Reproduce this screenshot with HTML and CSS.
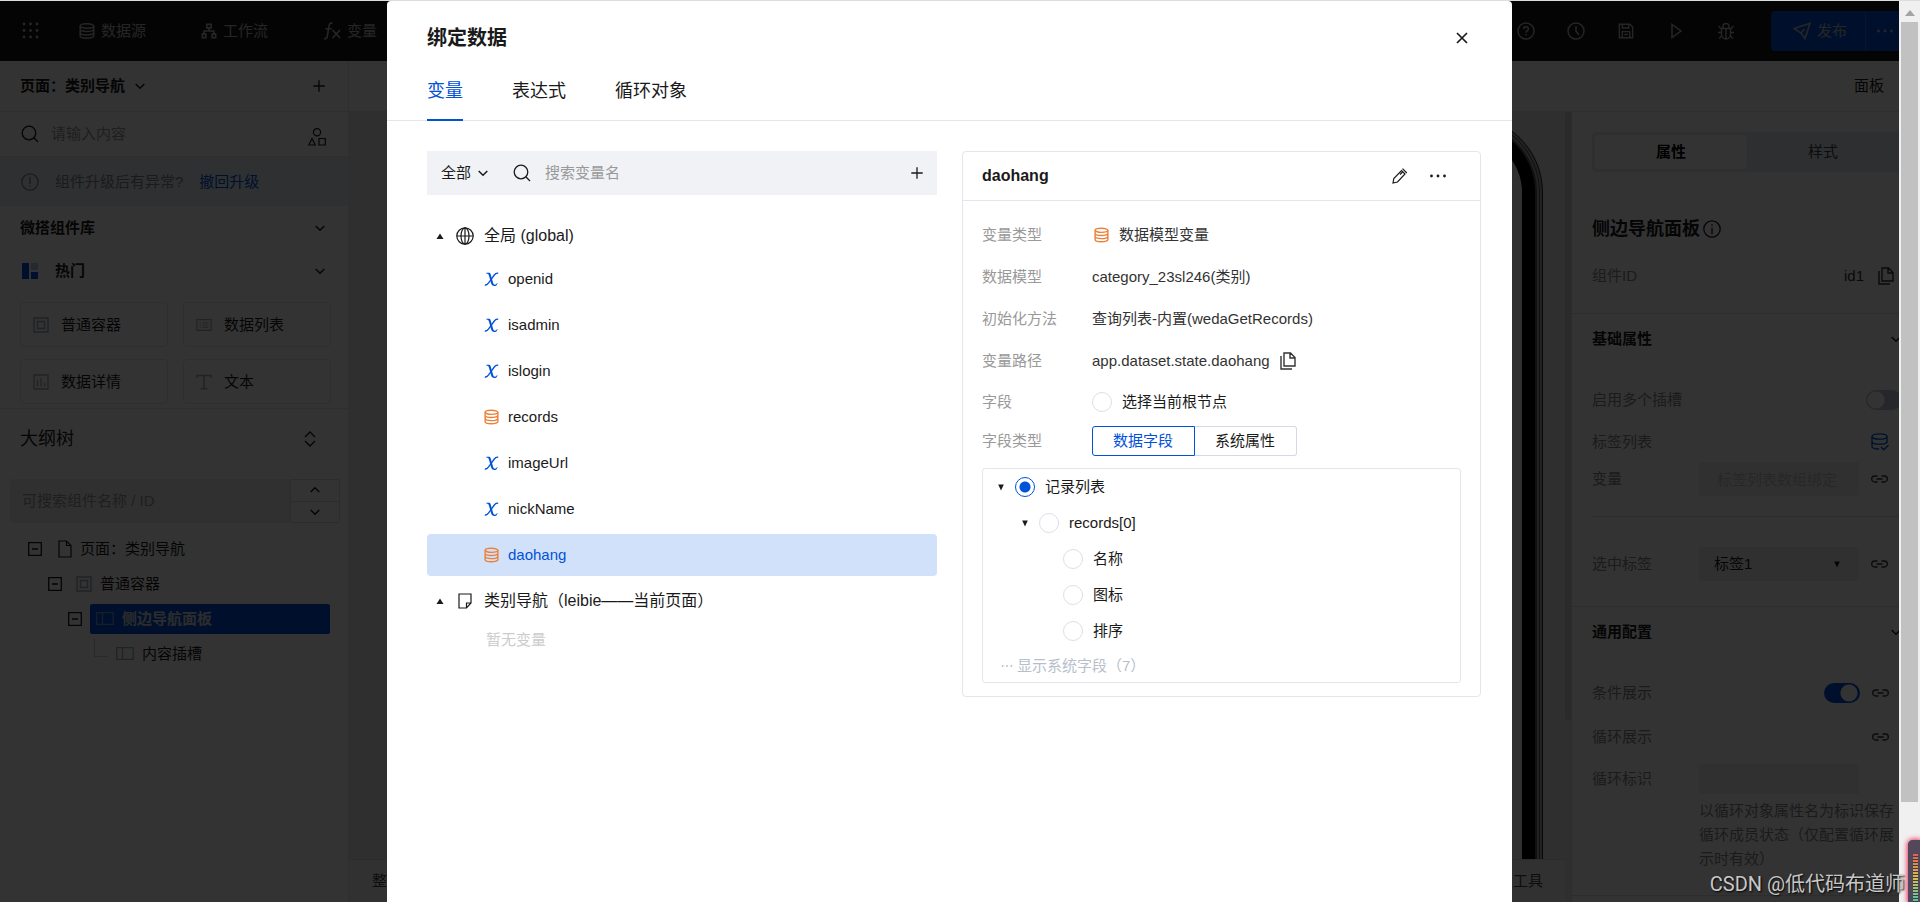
FILE: index.html
```
<!DOCTYPE html>
<html lang="zh-CN">
<head>
<meta charset="utf-8">
<title>绑定数据</title>
<link rel="stylesheet" href="styles.css">
</head>
<body>
<svg class="sprite" aria-hidden="true">
  <symbol id="i-grid" viewBox="0 0 18 18"><g fill="currentColor"><circle cx="2" cy="2" r="1.4"/><circle cx="8.500" cy="2" r="1.4"/><circle cx="15" cy="2" r="1.4"/><circle cx="2" cy="8.500" r="1.4"/><circle cx="8.500" cy="8.500" r="1.4"/><circle cx="15" cy="8.500" r="1.4"/><circle cx="2" cy="15" r="1.4"/><circle cx="8.500" cy="15" r="1.4"/><circle cx="15" cy="15" r="1.4"/></g></symbol>
  <symbol id="i-db" viewBox="0 0 16 16"><g fill="none" stroke="currentColor" stroke-width="1.500"><ellipse cx="8" cy="3" rx="6.800" ry="2.200"/><path d="M1.200 3v10c0 1.200 3 2.200 6.800 2.200s6.800-1 6.800-2.200V3M1.200 6.300c0 1.200 3 2.200 6.800 2.200s6.800-1 6.800-2.200M1.200 9.700c0 1.200 3 2.200 6.800 2.200s6.800-1 6.800-2.200"/></g></symbol>
  <symbol id="i-flow" viewBox="0 0 18 18"><g fill="none" stroke="currentColor" stroke-width="1.800"><path d="M6.500 1.500h5v4h-5zM1.500 12.500h4v4h-4zM12.500 12.500h4v4h-4zM9 5.500V9M3.500 12.500V9h11v3.500"/></g></symbol>
  <symbol id="i-fx" viewBox="0 0 18 18"><path d="M9.500 1.300C7 .6 6.300 2 6 4L4.300 14c-.4 2.300-1.500 3-3.300 2.500M2.500 6.800h6M9.500 8l7.500 8M17 8l-7.500 8" fill="none" stroke="currentColor" stroke-width="1.600"/></symbol>
  <symbol id="i-help" viewBox="0 0 18 18"><g fill="none" stroke="currentColor" stroke-width="1.500"><circle cx="9" cy="9" r="8"/><path d="M6.600 7.200C6.600 5.500 7.600 4.700 9 4.700s2.400.9 2.400 2.200c0 1.700-2.400 1.900-2.400 3.900M9 12v1.600"/></g></symbol>
  <symbol id="i-clock" viewBox="0 0 18 18"><g fill="none" stroke="currentColor" stroke-width="1.500"><circle cx="9" cy="9" r="8"/><path d="M9 4v5.200l3 3.500"/></g></symbol>
  <symbol id="i-save" viewBox="0 0 18 18"><path d="M1.500 1.500h12l3 3v12h-15zM5 1.500v4.200h7V1.500M4.800 16.500V9.700h8.400v6.800M7 13h4" fill="none" stroke="currentColor" stroke-width="1.600"/></symbol>
  <symbol id="i-play" viewBox="0 0 18 18"><path d="M5 2.500v13L14 9z" fill="none" stroke="currentColor" stroke-width="1.500"/></symbol>
  <symbol id="i-bug" viewBox="0 0 18 18"><path d="M4.500 6.500h9v5.500a4.500 5 0 0 1-9 0zM6 6.500V4.500a3 3 0 0 1 6 0v2M9 7v9.500M1.500 4l3 3M16.500 4l-3 3M1 10.500h3.500M17 10.500h-3.500M2 16.500l3-3M16 16.500l-3-3" fill="none" stroke="currentColor" stroke-width="1.400"/></symbol>
  <symbol id="i-send" viewBox="0 0 18 18"><path d="M1 6.500 17 1.500l-5 15-4-5.500zM8 11l3.500-4" fill="none" stroke="currentColor" stroke-width="1.600"/></symbol>
  <symbol id="i-dots" viewBox="0 0 18 18"><g fill="currentColor"><circle cx="2.500" cy="9" r="1.400"/><circle cx="9" cy="9" r="1.400"/><circle cx="15.500" cy="9" r="1.400"/></g></symbol>
  <symbol id="i-down" viewBox="0 0 12 12"><path d="M1.700 4 6 8.300 10.300 4" fill="none" stroke="currentColor" stroke-width="1.500"/></symbol>
  <symbol id="i-up" viewBox="0 0 12 12"><path d="M1.700 8 6 3.700 10.300 8" fill="none" stroke="currentColor" stroke-width="1.500"/></symbol>
  <symbol id="i-updown" viewBox="0 0 16 16"><path d="M3 6l5-5 5 5M3 10l5 5 5-5" fill="none" stroke="currentColor" stroke-width="1.400"/></symbol>
  <symbol id="i-plus" viewBox="0 0 12 12"><path d="M6 .3v11.400M.3 6h11.400" fill="none" stroke="currentColor" stroke-width="1.300"/></symbol>
  <symbol id="i-search" viewBox="0 0 18 18"><g fill="none" stroke="currentColor" stroke-width="1.300"><circle cx="8" cy="8" r="6.800"/><path d="m12.800 12.800 4.200 4.200"/></g></symbol>
  <symbol id="i-shapes" viewBox="0 0 18 18"><g fill="none" stroke="currentColor" stroke-width="1.200"><circle cx="9" cy="4.300" r="3.600"/><path d="M4 10.500.8 17h6.400zM11 10.500h6.300V17H11z"/></g></symbol>
  <symbol id="i-warn" viewBox="0 0 18 18"><g fill="none" stroke="currentColor" stroke-width="1.300"><circle cx="9" cy="9" r="8.200"/><path d="M9 4v7M9 12.500V14"/></g></symbol>
  <symbol id="i-info" viewBox="0 0 18 18"><g fill="none" stroke="currentColor" stroke-width="1.300"><circle cx="9" cy="9" r="8.200"/><path d="M9 7.500V14M9 4.200v1.600"/></g></symbol>
  <symbol id="i-blocks" viewBox="0 0 16 16"><path d="M0 0h7v16H0zM9 9h7v7H9z" fill="#0052d9"/><path d="M9 0h7v7H9z" fill="#b5c7f0"/></symbol>
  <symbol id="i-box" viewBox="0 0 16 16"><path d="M1 1h14v14H1zM4.500 4.500h7v7h-7z" fill="none" stroke="currentColor" stroke-width="1.400"/></symbol>
  <symbol id="i-list" viewBox="0 0 18 18"><path d="M1 3h16v12H1zM4 6.500h1.500M7 6.500h7M4 9h1.500M7 9h7M4 11.500h1.500M7 11.500h7" fill="none" stroke="currentColor" stroke-width="1.300"/></symbol>
  <symbol id="i-chart" viewBox="0 0 16 16"><path d="M1 1h14v14H1zM4.500 6v6.500M8 4v8.500M11.500 9v3.500" fill="none" stroke="currentColor" stroke-width="1.300"/></symbol>
  <symbol id="i-text" viewBox="0 0 16 16"><path d="M1 4V1.500h14V4M8 1.500v13M4.500 14.800h7" fill="none" stroke="currentColor" stroke-width="1.500"/></symbol>
  <symbol id="i-minus" viewBox="0 0 14 14"><path d="M.7.7h12.600v12.600H.7zM4 7h6" fill="none" stroke="currentColor" stroke-width="1.300"/></symbol>
  <symbol id="i-file" viewBox="0 0 14 18"><path d="M1 1h7.500L13 5.500V17H1zM8.500 1v4.500H13" fill="none" stroke="currentColor" stroke-width="1.200"/></symbol>
  <symbol id="i-cols" viewBox="0 0 18 13"><path d="M.7.7h16.600v11.600H.7zM6.500.7v11.600" fill="none" stroke="currentColor" stroke-width="1.300"/></symbol>
  <symbol id="i-copy" viewBox="0 0 16 18"><path d="M4 1h6.500L15 5.500V14H4zM10 1v5h5M1 4v13h11" fill="none" stroke="currentColor" stroke-width="1.400"/></symbol>
  <symbol id="i-link" viewBox="0 0 17 8"><path d="M6.500 1H3.700a3 3 0 0 0 0 6h2.800M10.500 1h2.800a3 3 0 0 1 0 6h-2.800M5.500 4h6" fill="none" stroke="currentColor" stroke-width="1.300"/></symbol>
  <symbol id="i-dbok" viewBox="0 0 18 18"><ellipse cx="8.500" cy="3.500" rx="7.500" ry="2.700" fill="none" stroke="currentColor" stroke-width="1.300"/><path d="M1 3.500v10C1 15 4 16 8 16M1 8.500C1 10 4.400 11.200 8.500 11.200S16 10 16 8.500M16 3.500V10M10 14l2.800 2.800L17.500 12" fill="none" stroke="currentColor" stroke-width="1.300"/></symbol>
  <symbol id="i-close" viewBox="0 0 12 12"><path d="m1 1 10 10M11 1 1 11" fill="none" stroke="currentColor" stroke-width="1.700"/></symbol>
  <symbol id="i-globe" viewBox="0 0 18 18"><g fill="none" stroke="currentColor" stroke-width="1.200"><circle cx="9" cy="9" r="8.200"/><ellipse cx="9" cy="9" rx="4" ry="8.200"/><path d="M.8 9h16.400M9 .8v16.400"/></g></symbol>
  <symbol id="i-note" viewBox="0 0 14 16"><path d="M1 1h12v9l-4.500 5H1zM13 10H8.500v5" fill="none" stroke="currentColor" stroke-width="1.200"/></symbol>
  <symbol id="i-x" viewBox="0 0 15 15"><path d="M2.300 1.300H5c1 0 1.400.6 1.700 1.600l2.400 8.400c.3 1.200.8 1.900 1.900 1.900.9 0 1.500-.6 2-1.600l.6.300c-.6 1.600-1.600 2.600-3.200 2.600-1.900 0-2.800-1-3.300-2.800L4.900 4c-.3-1.200-.8-1.700-2.600-1.900z" fill="currentColor"/><path d="M14.200 1.900c-1.700-.7-2.700.1-3.900 1.600L4.800 11.200C3.500 13 2.500 14 .8 13.300" fill="none" stroke="currentColor" stroke-width="1.300"/></symbol>
  <symbol id="i-pencil" viewBox="0 0 16 16"><path d="M1 15l.8-4.500L9.500 2.500l3.500 3.500L5.500 14zM10.500.7l4.300 4.300M8 6.500l2.500-2.500" fill="none" stroke="currentColor" stroke-width="1.200"/></symbol>
  <symbol id="i-tri-up" viewBox="0 0 8 8"><path d="M4 1.500l3.500 5.500h-7z" fill="currentColor"/></symbol>
  <symbol id="i-tri-down" viewBox="0 0 8 8"><path d="M4 7.500L6.800 1.500H1.200z" fill="currentColor"/></symbol>
</svg>

<div class="screen">
  <div class="app">
    <header class="topbar">
      <button class="icon-btn" aria-label="应用"><svg class="s18"><use href="#i-grid"/></svg></button>
      <nav class="topnav">
        <a href="#"><svg class="s16"><use href="#i-db"/></svg>数据源</a>
        <a href="#"><svg class="s16"><use href="#i-flow"/></svg>工作流</a>
        <a href="#"><svg class="s18"><use href="#i-fx"/></svg>变量</a>
      </nav>
      <div class="tools">
        <button class="icon-btn" aria-label="帮助"><svg class="s18"><use href="#i-help"/></svg></button>
        <button class="icon-btn" aria-label="历史"><svg class="s18"><use href="#i-clock"/></svg></button>
        <button class="icon-btn" aria-label="保存"><svg class="s16"><use href="#i-save"/></svg></button>
        <button class="icon-btn" aria-label="预览"><svg class="s18"><use href="#i-play"/></svg></button>
        <button class="icon-btn" aria-label="调试"><svg class="s18"><use href="#i-bug"/></svg></button>
      </div>
      <div class="publish">
        <button class="publish-main"><svg class="s18"><use href="#i-send"/></svg>发布</button>
        <button class="publish-more" aria-label="更多"><svg class="s18"><use href="#i-dots"/></svg></button>
      </div>
    </header>

    <div class="workspace">
      <aside class="sidebar">
        <div class="page-title">
          <button class="page-switch">页面：类别导航<svg class="s12"><use href="#i-down"/></svg></button>
          <button class="icon-btn" aria-label="新建页面"><svg class="s12"><use href="#i-plus"/></svg></button>
        </div>
        <div class="find">
          <svg class="s18"><use href="#i-search"/></svg>
          <input type="text" placeholder="请输入内容" aria-label="搜索组件">
          <button class="icon-btn" aria-label="组件分类"><svg class="s18"><use href="#i-shapes"/></svg></button>
        </div>
        <div class="notice"><svg class="s18"><use href="#i-warn"/></svg><span>组件升级后有异常?</span><a href="#">撤回升级</a></div>
        <button class="fold lib">微搭组件库<svg class="s12"><use href="#i-down"/></svg></button>
        <button class="fold hot"><span><svg class="s16"><use href="#i-blocks"/></svg>热门</span><svg class="s12"><use href="#i-down"/></svg></button>
        <div class="blocks">
          <button><svg class="s16"><use href="#i-box"/></svg>普通容器</button>
          <button><svg class="s16"><use href="#i-list"/></svg>数据列表</button>
          <button><svg class="s16"><use href="#i-chart"/></svg>数据详情</button>
          <button><svg class="s16"><use href="#i-text"/></svg>文本</button>
        </div>
        <section class="outline">
          <div class="outline-head"><h2>大纲树</h2><button class="icon-btn" aria-label="展开"><svg class="s16"><use href="#i-updown"/></svg></button></div>
          <div class="outline-find">
            <input type="text" placeholder="可搜索组件名称 / ID" aria-label="可搜索组件名称 / ID">
            <div class="steps">
              <button aria-label="上一个"><svg class="s12"><use href="#i-up"/></svg></button>
              <button aria-label="下一个"><svg class="s12"><use href="#i-down"/></svg></button>
            </div>
          </div>
          <ul class="tree">
            <li class="d0"><svg class="s14"><use href="#i-minus"/></svg><span class="node"><svg class="file"><use href="#i-file"/></svg>页面：类别导航</span></li>
            <li class="d1"><svg class="s14"><use href="#i-minus"/></svg><span class="node"><svg class="s16 dim"><use href="#i-box"/></svg>普通容器</span></li>
            <li class="d2"><svg class="s14"><use href="#i-minus"/></svg><span class="node active"><svg class="cols"><use href="#i-cols"/></svg>侧边导航面板</span></li>
            <li class="d3"><i class="elbow"></i><span class="node"><svg class="cols dim"><use href="#i-cols"/></svg>内容插槽</span></li>
          </ul>
        </section>
      </aside>

      <div class="main">
        <div class="subbar"><span>面板</span></div>
        <div class="stage-row">
          <div class="stage">
            <div class="canvas"><div class="phone"></div></div>
            <div class="dock"><span>整</span><span>开发工具</span></div>
          </div>
          <div class="stage-scroll"><i></i></div>
          <aside class="props">
            <div class="props-in">
              <div class="ptabs"><button class="on">属性</button><button>样式</button></div>
              <h2 class="pname">侧边导航面板<svg class="s18"><use href="#i-info"/></svg></h2>
              <div class="prow idrow"><span>组件ID</span><span class="idval">id1<svg class="copy"><use href="#i-copy"/></svg></span></div>
              <section class="psec">
                <h3>基础属性<svg class="s12"><use href="#i-down"/></svg></h3>
                <div class="prow"><label for="slots">启用多个插槽</label><input class="switch" type="checkbox" id="slots"></div>
                <div class="prow inset listrow"><span>标签列表</span><svg class="s18 blue"><use href="#i-dbok"/></svg></div>
                <div class="prow inset varrow"><label for="vars">变量</label><span class="field"><input id="vars" type="text" placeholder="标签列表数组绑定"><svg class="link"><use href="#i-link"/></svg></span></div>
                <hr>
                <div class="prow inset"><label for="tab">选中标签</label><span class="field"><span class="select"><select id="tab"><option>标签1</option></select><svg class="s8"><use href="#i-tri-down"/></svg></span><svg class="link"><use href="#i-link"/></svg></span></div>
              </section>
              <section class="psec">
                <h3>通用配置<svg class="s12"><use href="#i-down"/></svg></h3>
                <div class="prow inset"><label for="cond">条件展示</label><span class="field end"><input class="switch" type="checkbox" id="cond" checked><svg class="link"><use href="#i-link"/></svg></span></div>
                <div class="prow inset"><span>循环展示</span><svg class="link"><use href="#i-link"/></svg></div>
                <div class="prow key"><label for="key">循环标识</label><span class="field"><input id="key" type="text"></span></div>
                <p class="hint">以循环对象属性名为标识保存循环成员状态（仅配置循环展示时有效）</p>
              </section>
              <section class="psec last"></section>
            </div>
          </aside>
        </div>
      </div>
    </div>

    <div class="mask">
      <div class="modal" role="dialog" aria-labelledby="dlg">
        <div class="modal-head"><h1 id="dlg">绑定数据</h1><button class="icon-btn" aria-label="关闭"><svg class="s12"><use href="#i-close"/></svg></button></div>
        <div class="tabs" role="tablist"><button role="tab" aria-selected="true">变量</button><button role="tab">表达式</button><button role="tab">循环对象</button></div>
        <div class="modal-body">
          <div class="vars">
            <div class="varbar">
              <button class="filter">全部<svg class="s12"><use href="#i-down"/></svg></button>
              <svg class="s18"><use href="#i-search"/></svg>
              <input type="text" placeholder="搜索变量名" aria-label="搜索变量名">
              <button class="icon-btn" aria-label="新建变量"><svg class="s12"><use href="#i-plus"/></svg></button>
            </div>
            <div class="group"><svg class="s8"><use href="#i-tri-up"/></svg><svg class="s18"><use href="#i-globe"/></svg>全局 (global)</div>
            <ul class="varlist">
              <li><button><svg class="s15"><use href="#i-x"/></svg>openid</button></li>
              <li><button><svg class="s15"><use href="#i-x"/></svg>isadmin</button></li>
              <li><button><svg class="s15"><use href="#i-x"/></svg>islogin</button></li>
              <li><button><svg class="s15 orange"><use href="#i-db"/></svg>records</button></li>
              <li><button><svg class="s15"><use href="#i-x"/></svg>imageUrl</button></li>
              <li><button><svg class="s15"><use href="#i-x"/></svg>nickName</button></li>
              <li><button class="active"><svg class="s15 orange"><use href="#i-db"/></svg>daohang</button></li>
            </ul>
            <div class="group second"><svg class="s8"><use href="#i-tri-up"/></svg><svg class="note"><use href="#i-note"/></svg>类别导航（leibie——当前页面）</div>
            <p class="none">暂无变量</p>
          </div>

          <div class="detail">
            <div class="detail-head"><h2>daohang</h2><button class="icon-btn" aria-label="编辑"><svg class="s16"><use href="#i-pencil"/></svg></button><button class="icon-btn" aria-label="更多"><svg class="s18"><use href="#i-dots"/></svg></button></div>
            <div class="detail-body">
              <dl>
                <dt>变量类型</dt><dd class="typed"><svg class="s15 orange"><use href="#i-db"/></svg>数据模型变量</dd>
                <dt>数据模型</dt><dd>category_23sl246(类别)</dd>
                <dt>初始化方法</dt><dd>查询列表-内置(wedaGetRecords)</dd>
                <dt>变量路径</dt><dd>app.dataset.state.daohang<button class="icon-btn" aria-label="复制"><svg class="copy"><use href="#i-copy"/></svg></button></dd>
                <dt class="short">字段</dt><dd class="short"><label><input type="radio" name="node">选择当前根节点</label></dd>
                <dt class="short">字段类型</dt><dd class="short"><span class="seg"><button class="on">数据字段</button><button>系统属性</button></span></dd>
              </dl>
              <div class="fields">
                <div class="frow"><svg class="s8"><use href="#i-tri-down"/></svg><label><input type="radio" name="node" checked>记录列表</label></div>
                <div class="frow l1"><svg class="s8"><use href="#i-tri-down"/></svg><label><input type="radio" name="node">records[0]</label></div>
                <div class="frow l2"><label><input type="radio" name="node">名称</label></div>
                <div class="frow l2"><label><input type="radio" name="node">图标</label></div>
                <div class="frow l2"><label><input type="radio" name="node">排序</label></div>
                <button class="more"><svg class="s12"><use href="#i-dots"/></svg>显示系统字段（7）</button>
              </div>
            </div>
          </div>
        </div>
      </div>
    </div>
  </div>
  <div class="scrollbar"><svg viewBox="0 0 10 6"><path d="M5 0l5 6H0z"/></svg><i></i></div>
  <div class="watermark">CSDN @低代码布道师</div>
  <div class="gauge"></div>
</div>
</body>
</html>
```
FILE: styles.css
```
* { box-sizing: border-box; }
body { margin: 0; font: 15px/24px "Liberation Sans", "Noto Sans CJK SC", sans-serif; color: #1a1a1a; }
button { font: inherit; color: inherit; background: none; border: 0; padding: 0; cursor: pointer; }
input, select { font: inherit; color: inherit; border: 0; outline: 0; margin: 0; background: none; min-width: 0; }
input::placeholder { color: #999; opacity: 1; }
a { color: inherit; text-decoration: none; }
h1, h2, h3, p, ul, dl, dd { margin: 0; padding: 0; }
ul { list-style: none; }
svg { flex: none; display: block; }
.sprite { position: absolute; width: 0; height: 0; }
.icon-btn { display: flex; align-items: center; justify-content: center; }
.s8 { width: 8px; height: 8px; }
.s12 { width: 12px; height: 12px; }
.s14 { width: 14px; height: 14px; }
.s15 { width: 15px; height: 16px; }
.s16 { width: 16px; height: 16px; }
.s18 { width: 18px; height: 18px; }
.copy { width: 16px; height: 18px; }
.link { width: 17px; height: 8px; }
.note { width: 14px; height: 16px; margin: 0 2px; }
.orange { color: #ed8139; }
.blue { color: #0052d9; }

.screen { position: relative; display: flex; height: 100vh; border-top: 1px solid #dcdcdc; overflow: hidden; }
.app { position: relative; flex: 1; min-width: 0; display: flex; flex-direction: column; }

/* top bar */
.topbar { display: flex; align-items: center; height: 60px; padding-left: 22px; background: #141414; color: #bbb; flex: none; }
.topnav { display: flex; gap: 55px; margin-left: 39px; }
.topnav a { display: flex; align-items: center; gap: 6px; }
.tools { display: flex; align-items: center; margin-left: auto; margin-right: 20px; }
.tools .icon-btn { width: 50px; height: 40px; }
.publish { display: flex; height: 40px; background: #0052d9; border-radius: 4px 0 0 4px; }
.publish-main { display: flex; align-items: center; justify-content: center; gap: 6px; width: 94px; padding-left: 4px; }
.publish-more { width: 34px; border-left: 1px solid #1f66dd; padding-left: 10px; }

/* left side */
.workspace { flex: 1; min-height: 0; display: flex; background: #fff; }
.sidebar { width: 349px; flex: none; border-right: 1px solid #e6e6e6; }
.page-title { display: flex; align-items: center; justify-content: space-between; height: 51px; padding: 0 23px 0 20px; border-bottom: 1px solid #e6e6e6; font-weight: 700; }
.page-switch { display: flex; align-items: center; gap: 9px; font-weight: 700; }
.find { display: flex; align-items: center; gap: 12px; height: 46px; padding: 0 22px 0 21px; border-bottom: 2px solid #e6e8ee; }
.find input { flex: 1; padding: 0; }
.find .icon-btn { padding-top: 6px; }
.notice { display: flex; align-items: center; height: 48px; padding-left: 21px; gap: 16px; background: #e9eff8; color: #888; border-bottom: 1px solid #e1e8f5; }
.notice a { color: #0052d9; }
.fold { display: flex; align-items: center; justify-content: space-between; width: 100%; height: 43px; padding: 0 22px 0 20px; font-weight: 700; }
.fold.hot { padding-left: 22px; }
.fold span { display: flex; align-items: center; gap: 17px; }
.blocks { display: grid; grid-template-columns: 1fr 1fr; gap: 12px 15px; padding: 10px 17px 4px 20px; }
.blocks button { display: flex; align-items: center; gap: 12px; height: 45px; padding-left: 12px; border: 1px solid #e6e6e6; border-radius: 4px; }
.blocks svg, .dim { color: #a3a9b8; }
.outline { border-top: 1px solid #e1e3e8; }
.outline-head { display: flex; align-items: center; justify-content: space-between; height: 60px; padding: 0 30px 0 20px; }
.outline-head h2 { font-size: 18px; font-weight: 400; }
.outline-find { display: flex; height: 44px; margin: 10px 8px 8px 10px; }
.outline-find input { flex: 1; background: #f0f0f0; padding: 0 12px; border-radius: 4px 0 0 4px; }
.steps { width: 50px; display: flex; flex-direction: column; border: 1px solid #dcdcdc; border-radius: 2px; }
.steps button { flex: 1; display: flex; align-items: center; justify-content: center; }
.steps button + button { border-top: 1px solid #dcdcdc; }
.tree li { display: flex; align-items: center; height: 35px; padding: 0 18px 0 28px; gap: 8px; }
.tree .d1 { padding-left: 48px; }
.tree .d2 { padding-left: 68px; }
.tree .d3 { padding-left: 94px; gap: 2px; }
.node { flex: 1; display: flex; align-items: center; gap: 8px; height: 30px; padding-left: 6px; border-radius: 2px; }
.d0 .node { padding-left: 8px; }
.node.active { background: #0052d9; color: #ddd; font-weight: 700; }
.node.active svg { color: #6f97dc; }
.file { width: 14px; height: 18px; }
.cols { width: 18px; height: 13px; }
.elbow { width: 14px; height: 18px; margin-bottom: 12px; border: solid #ccc; border-width: 0 0 1px 1px; }

/* centre */
.main { flex: 1; min-width: 0; display: flex; flex-direction: column; }
.subbar { display: flex; align-items: center; justify-content: flex-end; height: 51px; padding-right: 15px; border-bottom: 1px solid #e6e6e6; flex: none; }
.stage-row { flex: 1; min-height: 0; display: flex; }
.stage { flex: 1; min-width: 0; display: flex; flex-direction: column; background: #ebebeb; }
.canvas { flex: 1; min-height: 0; display: flex; justify-content: flex-end; padding: 4px 22px 0 22px; overflow: hidden; background: #ebebeb; }
.phone { width: 480px; height: 1000px; border: 1px solid #2a2a3a; border-radius: 76px; background: #f0f0f0; box-shadow: inset 0 0 0 2px #aaa, inset 0 0 0 3px #555, inset 0 0 0 5px #aaa, inset 0 0 0 7px #555, inset 0 0 0 20px #000; }
.dock { display: flex; align-items: center; justify-content: space-between; height: 43px; padding: 0 22px 0 23px; background: #f6f6f6; border-top: 1px solid #ddd; color: #444; }
.stage-scroll { width: 6px; background: #ebebeb; flex: none; }
.stage-scroll i { display: block; height: 77%; background: #d2d2d2; border-radius: 3px; }

/* right side */
.props { width: 328px; flex: none; overflow: hidden; border-left: 1px solid #e0e0e0; }
.props-in { width: 350px; padding-top: 20px; }
.ptabs { display: flex; height: 40px; margin: 0 20px; padding: 3px; background: #e7eaef; border-radius: 4px; }
.ptabs button { flex: 1; color: #444; }
.ptabs .on { background: #fff; border-radius: 3px; color: #000; font-weight: 700; }
.pname { display: flex; align-items: center; gap: 3px; height: 34px; margin: 40px 20px 12px; font-size: 18px; }
.prow { display: flex; align-items: center; justify-content: space-between; height: 44px; margin: 0 20px; color: #888; }
.idrow { height: 36px; margin-bottom: 19px; }
.idval { display: flex; align-items: center; gap: 14px; padding-right: 8px; color: #333; }
.psec { border-top: 1px solid #e2e2e2; }
.psec h3 { display: flex; align-items: center; justify-content: space-between; height: 50px; margin: 0 20px 14px; font-size: 15px; }
.psec .link { color: #333; }
.inset { padding-right: 13px; }
.listrow { height: 40px; }
.varrow { height: 34px; }
.field { display: flex; align-items: center; gap: 12px; width: 190px; }
.field.end { width: auto; }
.field > input[type="text"], .select { width: 160px; height: 34px; background: #f0f0f0; border-radius: 2px; }
.field > input[type="text"] { padding: 0 18px; }
.field > input::placeholder { color: #c4c4c4; }
.select { display: flex; align-items: center; padding-right: 18px; color: #1a1a1a; }
.select select { flex: 1; appearance: none; height: 34px; padding-left: 15px; }
.psec hr { height: 1px; margin: 20px 20px 25px; border: 0; background: #e2e2e2; }
.psec + .psec { margin-top: 20px; }
.switch { appearance: none; width: 36px; height: 20px; border-radius: 10px; background: radial-gradient(circle at 10px 10px, #fff 8px, #bcc4d0 9px); }
.switch:checked { background: radial-gradient(circle at 25px 10px, #fff 8px, #0052d9 9px); }
.key { height: 40px; }
.key .field { width: 203px; }
.field > #key { height: 30px; }
.hint { width: 196px; margin-left: 127px; color: #888; }
.psec.last { margin-top: 24px; }

/* dialog */
.mask { position: absolute; inset: 0; display: flex; justify-content: center; background: rgba(0, 0, 0, 0.8); }
.modal { width: 1125px; max-width: 96%; min-height: 100%; background: #fff; border-radius: 4px 4px 0 0; }
.modal-head { display: flex; align-items: center; justify-content: space-between; height: 72px; padding: 2px 44px 0 40px; }
.modal-head h1 { font-size: 20px; line-height: 32px; }
.tabs { display: flex; gap: 49px; height: 48px; padding: 0 40px; border-bottom: 1px solid #e3e6eb; }
.tabs button { padding-bottom: 10px; font-size: 18px; height: 48px; border-bottom: 2px solid transparent; }
.tabs [aria-selected] { color: #0052d9; border-color: #0052d9; }
.modal-body { display: flex; align-items: flex-start; gap: 25px; padding: 30px 31px 0 40px; }
.vars { width: 510px; flex: none; }
.varbar { display: flex; align-items: center; height: 44px; padding: 0 14px; background: #f0f2f6; }
.filter { display: flex; align-items: center; gap: 6px; margin-right: 24px; }
.varbar input { flex: 1; padding-left: 14px; }
.group { display: flex; align-items: center; gap: 10px; height: 32px; margin-top: 25px; padding-left: 9px; font-size: 16px; }
.group .s8 { margin-right: 2px; }
.group.second { margin-top: 9px; }
.varlist { display: grid; gap: 4px; margin-top: 6px; }
.varlist button { display: flex; align-items: center; gap: 9px; width: 100%; height: 42px; padding-left: 57px; border-radius: 4px; }
.varlist svg:not(.orange) { color: #0052d9; }
.varlist .active { background: #d2e1fa; color: #0052d9; }
.none { margin-top: 11px; padding-left: 59px; color: #ccc; }
.detail { flex: 1; min-width: 0; border: 1px solid #e3e6eb; border-radius: 4px; }
.detail-head { display: flex; align-items: center; gap: 21px; height: 49px; padding: 0 33px 0 19px; border-bottom: 1px solid #e3e6eb; }
.detail-head h2 { flex: 1; font-size: 16px; }
.detail-body { padding: 13px 19px; }
.detail dl { display: grid; grid-template-columns: 110px 1fr; }
.detail dt, .detail dd { display: flex; align-items: center; height: 42px; }
.detail dt { color: #999; }
.detail dd { gap: 10px; color: #333; }
.detail .typed { padding-left: 2px; }
.detail .short { height: 39px; }
.detail label { display: flex; align-items: center; gap: 10px; color: #1a1a1a; }
input[type="radio"] { appearance: none; width: 20px; height: 20px; border: 1px solid #dcdfe8; border-radius: 50%; }
input[type="radio"]:checked { border-color: #0052d9; background: radial-gradient(circle, #0052d9 5px, #fff 6px); }
.seg { display: flex; height: 30px; color: #1a1a1a; }
.seg button { padding: 0 21px 0 20px; border: 1px solid #d5d9e3; border-left: 0; border-radius: 0 3px 3px 0; }
.seg .on { border: 1px solid #0052d9; border-radius: 3px 0 0 3px; color: #0052d9; }
.fields { margin-top: 8px; border: 1px solid #e3e6eb; border-radius: 3px; }
.frow { display: flex; align-items: center; gap: 10px; height: 36px; padding-left: 14px; }
.l1 { padding-left: 38px; }
.l2 { padding-left: 80px; }
.more { display: flex; align-items: center; gap: 4px; height: 33px; padding-left: 18px; color: #b8bfcc; }

/* window edge */
.scrollbar { width: 21px; flex: none; background: #f0f0f0; padding: 9px 2px 0; }
.scrollbar svg { width: 10px; height: 6px; margin: 0 auto 6px; fill: #a3a3a3; }
.scrollbar i { display: block; height: 780px; max-height: 88%; background: #c1c1c1; }
.watermark { position: absolute; right: 15px; bottom: 6px; font-family: Roboto, "Noto Sans CJK SC", sans-serif; font-size: 20px; line-height: 24px; color: #c8c8c8; text-shadow: 1px 1px 2px #000; }
.gauge { position: absolute; right: 0; bottom: 0; width: 12px; height: 62px; border: 4px solid #53475c; border-width: 14px 2px 0 5px; border-radius: 5px 0 0 0; box-shadow: 0 0 5px 1px #f0335c; background: repeating-linear-gradient(transparent 0 2px, #3a3a48 2px 3px), linear-gradient(#e0604a, #d8c24a 50%, #4ac7a0); }
```
